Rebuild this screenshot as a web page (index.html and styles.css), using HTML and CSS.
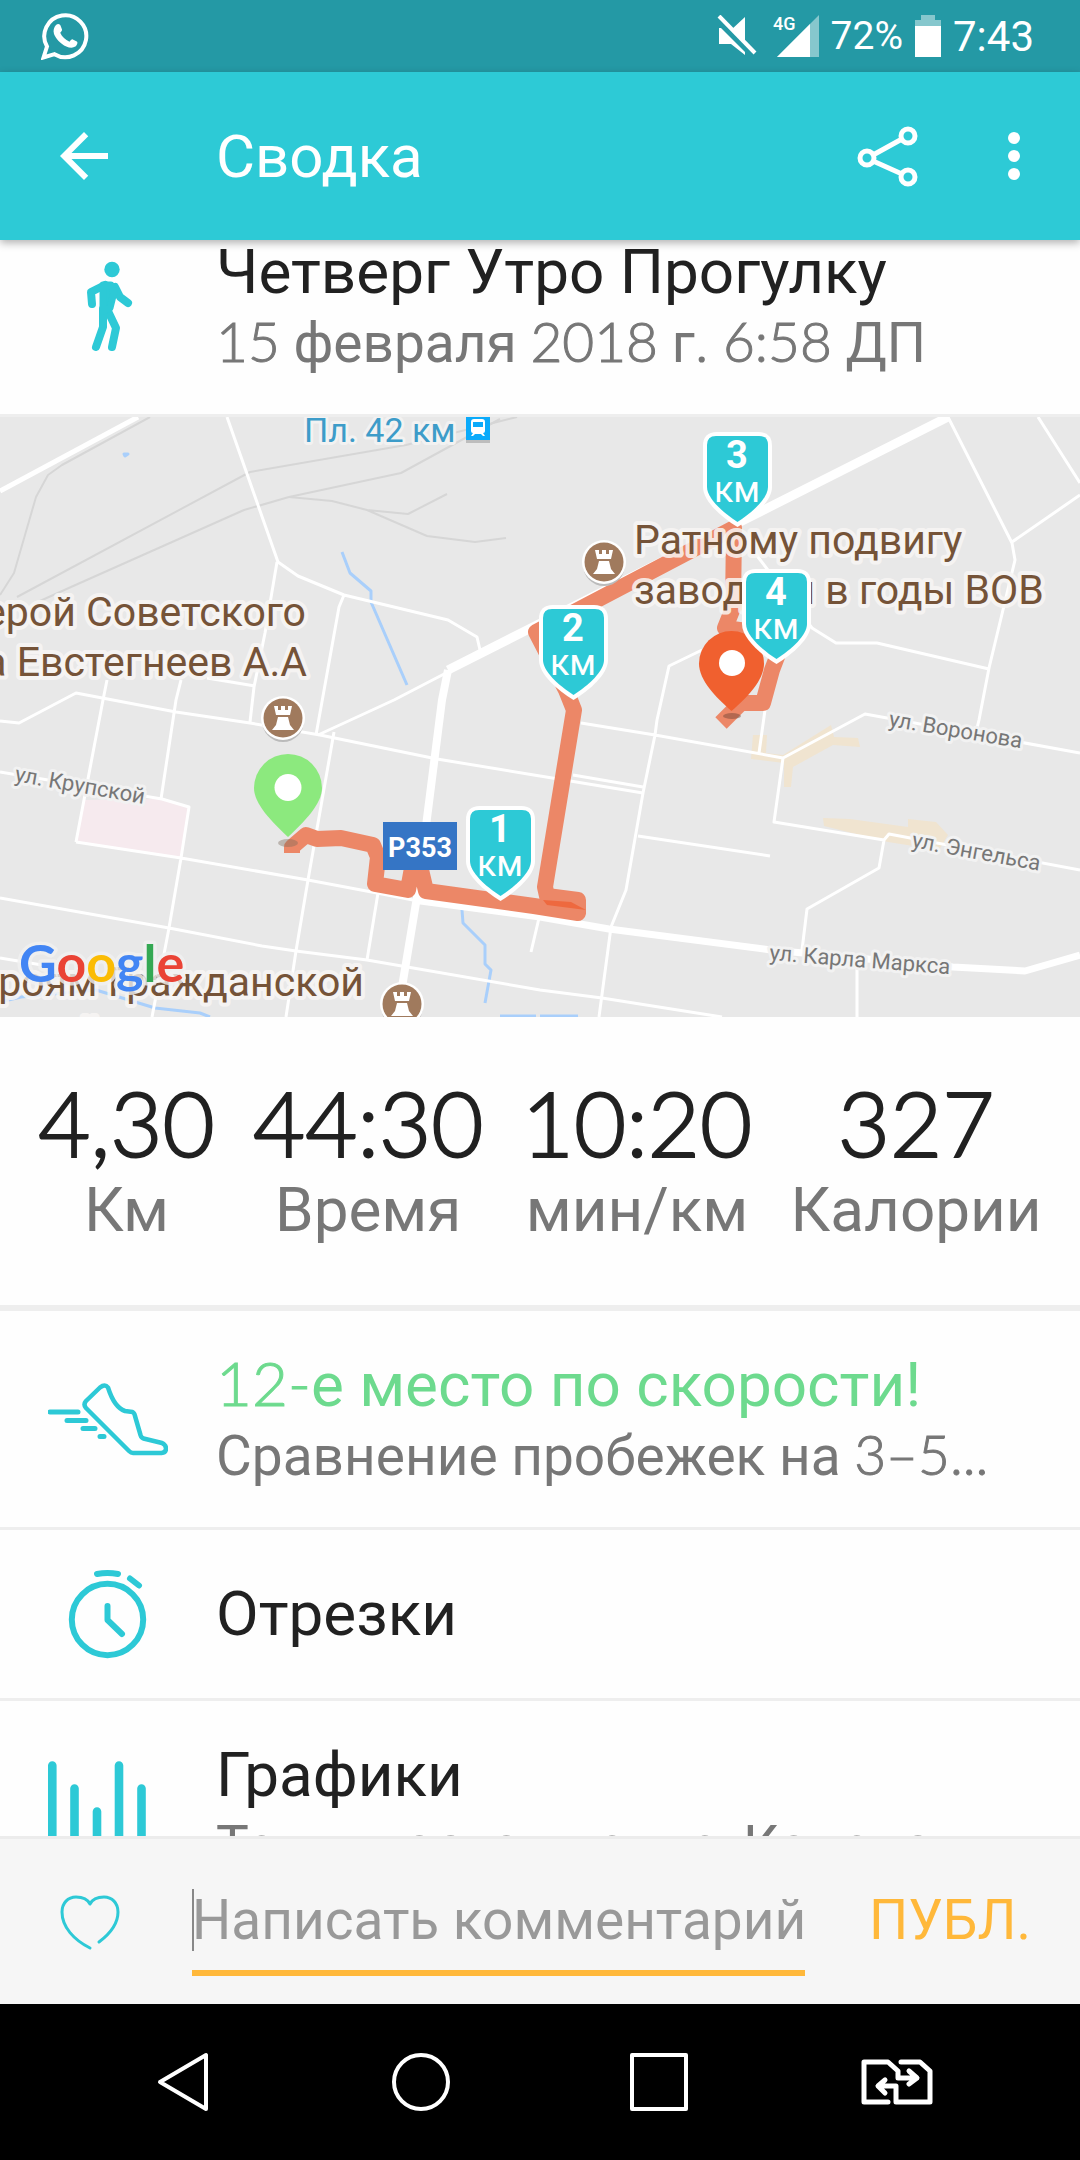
FILE: index.html
```html
<!DOCTYPE html>
<html lang="ru">
<head>
<meta charset="utf-8">
<meta name="viewport" content="width=device-width, initial-scale=1">
<title>Сводка</title>
<link rel="stylesheet" href="styles.css">
</head>
<body>
<div class="status">
  <svg class="status-app" width="48" height="48" viewBox="0 0 48 48" aria-hidden="true">
    <path d="M2.500 45.500 6 34.500A21 21 0 1 1 13.500 42.200Z" fill="none" stroke="#fff" stroke-width="4"/>
    <path d="M15 13c2-2 4-1 4.500.5l1.500 4c.4 1-.8 2.200-1.800 3.300 2 4.200 5 7 9.300 8.900 1.100-1.200 2.200-2.700 3.300-2.300l4 2c1.500.7 0 4.200-1.500 5.200-2.500 1.700-6 1.200-9-.2-6-2.700-10.500-7.700-12.300-12.500-1.100-3.400 0-7 2-8.900z" fill="#fff"/>
  </svg>
  <svg width="44" height="42" viewBox="0 0 44 42" fill="#fff" aria-hidden="true">
    <path d="M14 15 28 2v27zM2 13h2l24 24v3L14 29H2z"/>
    <path d="M2 1 38 38" stroke="#fff" stroke-width="4"/>
  </svg>
  <svg width="46" height="42" viewBox="0 0 46 42" aria-hidden="true">
    <path d="M46 0v42H4z" fill="#fff" opacity=".45"/>
    <path d="M37 9v33H4z" fill="#fff"/>
    <text class="net" x="0" y="15">4G</text>
  </svg>
  <span class="percent">72%</span>
  <svg width="26" height="42" viewBox="0 0 26 42" fill="#fff" aria-hidden="true">
    <path d="M6 0h14v5h6v6H0V5h6z" opacity=".45"/>
    <path d="M0 11h26v31H0z"/>
  </svg>
  <span class="time">7:43</span>
</div>

<header class="appbar">
  <button class="icon-btn" aria-label="Назад">
    <svg width="72" height="72" viewBox="0 0 24 24" fill="#fff"><path d="M20 11H7.830l5.590-5.590L12 4l-8 8 8 8 1.410-1.410L7.830 13H20z"/></svg>
  </button>
  <h1>Сводка</h1>
  <button class="icon-btn share" aria-label="Поделиться">
    <svg width="72" height="72" viewBox="0 0 72 72" fill="none" stroke="#fff" stroke-width="5">
      <circle cx="16" cy="38" r="7"/><circle cx="57" cy="16" r="7"/><circle cx="57" cy="57" r="7"/>
      <path d="M22 35 51 19M22 41l29 13" stroke-width="5"/>
    </svg>
  </button>
  <button class="icon-btn" aria-label="Ещё">
    <svg width="72" height="72" viewBox="0 0 72 72" fill="#fff"><circle cx="36" cy="18" r="6"/><circle cx="36" cy="36" r="6"/><circle cx="36" cy="54" r="6"/></svg>
  </button>
</header>

<main>
  <section class="row head">
    <svg class="icon" width="120" height="112" viewBox="0 0 120 112" fill="none" stroke="#2dc9d6" stroke-width="8" stroke-linecap="round" stroke-linejoin="round" aria-hidden="true">
      <circle cx="64" cy="16.500" r="7.700" fill="#2dc9d6" stroke="none"/>
      <path d="M44 51 43 39 57 32M67 34l5 10 8 6M55 56v18l-7 20M59 56l9 19-4 19"/>
      <path d="M55 32h8l3 7-4 16-7 3z" fill="#2dc9d6" stroke-width="7"/>
    </svg>
    <div class="lines">
      <h2>Четверг Утро Прогулку</h2>
      <p><span class="num">15</span> февраля <span class="num">2018</span> г. <span class="num">6:58</span> ДП</p>
    </div>
  </section>

  <svg class="map" viewBox="0 0 1080 600" role="img" aria-label="Маршрут на карте">
    <defs>
      <g id="km">
        <path d="M14 0h41q14 0 14 14v41c0 14-18 30-34.500 40C18 85 0 69 0 55V14Q0 0 14 0z" fill="#fff"/>
        <path d="M13 4h43q9 0 9 9v42c0 11-15 25-30.500 35C19 80 4 66 4 55V13q0-9 9-9z" fill="#2dc9d6"/>
      </g>
      <g id="rook">
        <circle cy="3" r="21" fill="#bbb"/>
        <circle r="22" fill="#fff"/><circle r="19.500" fill="#a07a5d"/>
        <path d="M-9-12h4v4h3v-4h4v4h3v-4h4l-2 9H-7zM-5-1H5L7 7l4 5h-22l4-5z" fill="#fff"/>
      </g>
    </defs>
    <path class="pink" d="M84 383 162 382 189 390 181 440 76 425z"/>
    <path class="tan" d="M831 308 834 320 858 321 860 330 833 328 793 350 791 370H784V346L751 342 753 318H767L766 336 783 338z"/>
    <path class="tan" d="M823 401 850 402 908 410V402L936 405 948 418 939 433 888 425 824 409z"/>
    <g class="rail">
      <path d="M150 0 62 48 48 58 36 80 14 156 0 178"/>
      <path d="M17 180 250 55 406 28 517 0"/>
      <path d="M40 184 71 170 244 93 289 80 401 56 500 2"/>
      <path d="M289 80 332 84 367 93 408 97 447 77M367 93l60 26 48 6 31-4"/>
    </g>
    <g class="water">
      <path d="M342 135l8 21 21 18v11l36 83M462 493l1 13 22 22v19l6 6-6 33"/>
      <path d="M0 585 21 580 96 573 155 591 200 596 210 600M540 599h38M500 599h36"/>
      <path d="M124 37h4l-3 2z"/>
    </g>
    <g class="street">
      <path d="M0 74 138 0" stroke-width="5"/>
      <path d="M227 0l51 145 20 14 46 19 104 25 29 17 3 13M277 145l-12 71-11 54-4 35M344 178l-5 12-23 128M446 256l-52 27-76 35"/>
      <path d="M0 304 19 306 76 276 176 295 250 306 320 318 437 342 540 359 643 376M573 358l70 12M107 263l-4 20-27 142M181 263l-5 20-15 99M207 261l48 8"/>
      <path d="M0 355 162 382 189 390 181 441 169 511 152 600M76 425l105 16 127 22 69 13 36 7M0 481l169 30 93 18 34 5 71 9 173 30 62 8 120 19M0 541l60 10"/>
      <path d="M334 315l-26 148-12 71-10 66M378 476l-11 67M539 501l-8 34"/>
      <path d="M948 0l64 126 3 17-26 108-10 52-2 8M1012 125l68-47M1038 0l42 66M750 120l8 20 54 71 24 15h41l112 26"/>
      <path d="M702 233l-33 16-12 54-2 15-12 58-17 97-15 37-12 90M581 306l74 12 128 23 82-44 215 39M765 293l-6 43M783 341l-9 64 110 18 5-6 191 36M884 423l-5 28-72 41-5 41M638 419l132 20M857 550v50"/>
      <path d="M948 0 742 104 527 213 448 253" stroke-width="9"/>
      <path d="M448 253 442 283 417 480 397 600" stroke-width="8"/>
      <path d="M413 483 540 500 609 512 771 533 953 550 1025 554 1080 538" stroke-width="7"/>
    </g>
    <g class="route">
      <path d="M292 436v-6l14-12 11 4 24-1 32 7 5 12-3 27 33 6 6-33h4l8 34 108 15 44 7V483l-31-4-2-9 29-177-8-20-30-58 198-104-1 80-8 20 60 8-13 34-9 33h-22l-20 20"/>
      <path class="overlap" d="M543 483 571 485 586 493 547 488z"/>
    </g>

    <g class="place">
      <text x="306" y="209" text-anchor="end">Герой Советского</text>
      <text x="307" y="259" text-anchor="end">Союза Евстегнеев А.А</text>
      <text x="634" y="137">Ратному подвигу</text>
      <text x="634" y="187">заводчан в годы ВОВ</text>
      <text x="364" y="579" text-anchor="end">Героям Гражданской</text>
      <text x="31" y="629">войны</text>
    </g>
    <g class="name">
      <text transform="translate(14 364) rotate(10)">ул. Крупской</text>
      <text transform="translate(888 309) rotate(9.500)">ул. Воронова</text>
      <text transform="translate(911 430) rotate(10.500)">ул. Энгельса</text>
      <text transform="translate(769 543) rotate(4.500)">ул. Карла Маркса</text>
    </g>
    <text class="station" x="304" y="25">Пл. 42 км</text>
    <path d="M466 0h24v26h-24z" fill="#bdbdbd"/>
    <path d="M466 0h24v23h-24z" fill="#0aaafa"/>
    <path d="M471 5q0-3 3-3h8q3 0 3 3v9q0 2-2 2l2 3h-2l-2-2h-6l-2 2h-2l2-3q-2 0-2-2zm2 0v5h10V5z" fill="#fff" fill-rule="evenodd"/>

    <use href="#rook" x="283" y="301"/>
    <use href="#rook" x="604" y="145"/>
    <use href="#rook" x="402" y="587"/>

    <path d="M383 405h74v48h-74z" fill="#3575c5"/>
    <text class="shield" x="420" y="440">Р353</text>

    <ellipse cx="288" cy="426" rx="10" ry="4" fill="#7a6a5a" opacity=".4"/>
    <path fill="#8ce97e" d="M288 337a34 34 0 0 1 34 34c0 16-18 34-34 49-16-15-34-33-34-49a34 34 0 0 1 34-34z"/>
    <circle cx="288" cy="370.500" r="13.500" fill="#fff"/>

    <g class="km">
      <use href="#km" x="466" y="389"/><text class="km-n" x="500" y="425">1</text><text x="500" y="459">км</text>
      <use href="#km" x="539" y="188"/><text class="km-n" x="573" y="224">2</text><text x="573" y="258">км</text>
      <use href="#km" x="703" y="15"/><text class="km-n" x="737" y="51">3</text><text x="737" y="85">км</text>
    </g>
    <ellipse cx="732" cy="299" rx="9" ry="3" fill="#7a4a3a" opacity=".5"/>
    <path fill="#f0602f" d="M731.500 214a32.500 32.500 0 0 1 32.500 32.500c0 17-17 34-32.500 47.500-15.500-13.500-32.500-30.500-32.500-47.500A32.500 32.500 0 0 1 731.500 214z"/>
    <circle cx="732" cy="246" r="13" fill="#fff"/>
    <g class="km">
      <use href="#km" x="742" y="152"/><text class="km-n" x="776" y="188">4</text><text x="776" y="222">км</text>
    </g>

    <text class="google" x="19" y="565"><tspan fill="#4285f4">G</tspan><tspan fill="#ea4335">o</tspan><tspan fill="#fbbc05">o</tspan><tspan fill="#4285f4">g</tspan><tspan fill="#34a853">l</tspan><tspan fill="#ea4335">e</tspan></text>
  </svg>

  <dl class="stats">
    <div><dd>4,30</dd><dt>Км</dt></div>
    <div><dd>44:30</dd><dt>Время</dt></div>
    <div><dd>10:20</dd><dt>мин/км</dt></div>
    <div><dd>327</dd><dt>Калории</dt></div>
  </dl>

  <section class="row">
    <svg class="icon" width="120" height="112" viewBox="0 0 120 112" fill="none" stroke="#2dc9d6" stroke-width="4.500" stroke-linecap="round" stroke-linejoin="round" aria-hidden="true">
      <path d="M38 35 52 21.500q5-4 8 0C63 31 68 42 77 45l7.500 1q2 1 2.500 4l5.500 19q1 3 3 3.500L114 77q4 2 4 5.500 0 4-4.500 4.500H85q-2 0-4-2L38 42q-3-3.500 0-7z"/>
      <path d="M2 46h28M19 54.500h19M35 62.500h12M52 70.500h4" stroke-width="5"/>
    </svg>
    <div class="lines">
      <h2 class="green"><span class="num">12-</span>е место по скорости!</h2>
      <p>Сравнение пробежек на <span class="num">3–5...</span></p>
    </div>
  </section>
  <section class="row single">
    <svg class="icon" width="120" height="112" viewBox="0 0 120 112" fill="none" stroke="#2dc9d6" stroke-width="6" stroke-linecap="round" stroke-linejoin="round" aria-hidden="true">
      <circle cx="59.500" cy="61.500" r="35.700"/>
      <path d="M49 16q10.500-2 21 0M82 20.500l9 7M59.500 48v14L74 76"/>
    </svg>
    <div class="lines"><h2>Отрезки</h2></div>
  </section>
  <section class="row">
    <svg class="icon" width="120" height="112" viewBox="0 0 120 112" fill="none" stroke="#2dc9d6" stroke-width="8.600" stroke-linecap="round" aria-hidden="true">
      <path d="M4.300 9.500V108M26.500 32.500V108M49 55.500V108M71 9.500V108M93.500 32.500V108"/>
    </svg>
    <div class="lines">
      <h2>Графики</h2>
      <p>Темп, восхождение, Каденс</p>
    </div>
  </section>
</main>

<form class="comment">
  <button type="button" class="like" aria-label="Нравится">
    <svg width="72" height="72" viewBox="0 0 72 72" fill="none" stroke="#2dc9d6" stroke-width="3" stroke-linecap="round" stroke-linejoin="round"><path d="M45 55C57 46 64 37 64 25 64 16 58 10 50 10 43 10 38 13 36 17 34 13 29 10 22 10 14 10 8 16 8 25 8 40 20 53 36 61"/></svg>
  </button>
  <label class="field"><input type="text" aria-label="Комментарий" placeholder="Написать комментарий"></label>
  <button type="button" class="post">ПУБЛ.</button>
</form>

<nav class="sysnav">
  <button aria-label="Назад"><svg width="60" height="60" viewBox="0 0 60 60"><path d="M53 3v54L7 30z"/></svg></button>
  <button aria-label="Домой"><svg width="60" height="60" viewBox="0 0 60 60"><circle cx="30" cy="30" r="27"/></svg></button>
  <button aria-label="Недавние"><svg width="60" height="60" viewBox="0 0 60 60"><path d="M3 3h54v54H3z"/></svg></button>
  <button aria-label="Сменить SIM"><svg width="74" height="48" viewBox="0 0 74 48"><path stroke-width="5" d="M28 44H4V4h24l10 9v7h16M49 13l8 7-8 6M41 4h19l10 9v31H36V28H20M25 22l-7 6 7 7"/></svg></button>
</nav>
</body>
</html>
```
FILE: styles.css
```css
* { box-sizing: border-box; }
body {
  margin: 0;
  height: 100vh;
  display: flex;
  flex-direction: column;
  background: #fefefe;
  color: #212121;
  font-family: Roboto, sans-serif;
  overflow: hidden;
}
h1, h2, p, dl, dd { margin: 0; font-weight: 400; }
svg { display: block; }
button {
  background: none;
  border: 0;
  padding: 0;
  font: inherit;
  color: inherit;
}

.status {
  flex: none;
  height: 72px;
  padding: 0 46px 0 41px;
  display: flex;
  align-items: center;
  gap: 12px;
  background: #2499a5;
  color: #fff;
}
.status-app { margin-right: auto; }
.net { font-size: 18px; font-weight: 500; fill: #fff; }
.percent { font-size: 39px; }
.time { font-size: 42px; }

.appbar {
  flex: none;
  height: 168px;
  padding: 0 30px 0 48px;
  display: flex;
  align-items: center;
  background: #2dcad6;
  color: #fff;
  position: relative;
  z-index: 1;
  box-shadow: 0 3px 8px rgba(0, 0, 0, .3);
}
.appbar h1 {
  flex: 1;
  margin-left: 96px;
  font-size: 60px;
}
.share { margin-right: 55px; }

main { flex: 1; min-height: 0; overflow: hidden; }
.row {
  display: flex;
  align-items: center;
  padding: 42px 48px 36px;
  border-bottom: 3px solid #eee;
}
.row.head { padding-top: 0; }
.row.single { padding-top: 28px; padding-bottom: 28px; }
.icon { flex: none; margin: -12px 48px -12px 0; }
.single .icon { margin-top: 0; margin-bottom: 0; }
.lines {
  flex: 1;
  min-width: 0;
  display: flex;
  flex-direction: column;
  gap: 4px;
  white-space: nowrap;
}
.lines h2 { font-size: 62px; line-height: 64px; }
.lines p { font-size: 55px; line-height: 70px; color: #777; }
.lines .green { color: #6dda8e; }
.num {
  font-family: Lato, sans-serif;
  font-weight: 300;
  line-height: 0;
  -webkit-text-stroke: 1px currentColor;
}

.map { width: 100%; height: auto; background: #e8e8e8; overflow: hidden; }
.pink { fill: #f6eaee; }
.tan { fill: #f0e4d0; }
.rail, .water, .street { fill: none; stroke-linejoin: round; }
.rail { stroke: #d6d6d6; stroke-width: 2; }
.water { stroke: #a9cffb; stroke-width: 3; }
.street { stroke: #fff; stroke-width: 3; }
.route { fill: none; stroke: #ec8767; stroke-width: 16; stroke-linejoin: round; }
.overlap { fill: #ee693f; stroke: none; }
.map text { paint-order: stroke; stroke-linejoin: round; }
.place { font-size: 41px; fill: #755338; stroke: rgba(248, 246, 244, .85); stroke-width: 8px; }
.name { font-size: 22px; fill: #777; stroke: #f2f2f2; stroke-width: 6px; }
.station { font-size: 34px; fill: #3d9cc9; stroke: #f2f2f2; stroke-width: 6px; }
.shield { font-size: 27px; font-weight: 700; fill: #fff; text-anchor: middle; }
.km { font-size: 36px; fill: #fff; text-anchor: middle; }
.km-n { font-size: 38px; font-weight: 700; }
.google {
  font-family: Lato, sans-serif;
  font-size: 52px;
  font-weight: 700;
  stroke: rgba(240, 240, 240, .8);
  stroke-width: 7px;
}

.stats {
  display: flex;
  justify-content: space-evenly;
  padding: 60px 0;
  border-bottom: 6px solid #eee;
  text-align: center;
}
.stats div { display: flex; flex-direction: column; gap: 8px; }
.stats dd {
  font-family: Lato, sans-serif;
  font-size: 90px;
  font-weight: 300;
  line-height: 90px;
  -webkit-text-stroke: 2px currentColor;
}
.stats dt { font-size: 62px; line-height: 70px; color: #777; }

.comment {
  flex: none;
  height: 168px;
  display: flex;
  align-items: flex-start;
  padding: 48px 49px 0 54px;
  border-top: 3px solid #ececec;
  background: #f6f6f6;
  font-size: 55px;
  line-height: 66px;
}
.like { margin-right: 66px; }
.field { flex: 1; min-width: 0; position: relative; }
.field::before {
  content: "";
  position: absolute;
  left: 0;
  top: 2px;
  width: 2px;
  height: 62px;
  background: #888;
}
.field input {
  display: block;
  width: 100%;
  height: 89px;
  padding: 0 0 17px;
  border: 0;
  border-bottom: 6px solid #ffb83a;
  outline: 0;
  background: none;
  font: inherit;
  text-overflow: clip;
}
.field input::placeholder { color: #999; opacity: 1; }
.post { margin-left: 64px; color: #ffb83a; }

.sysnav {
  flex: none;
  height: 156px;
  padding: 0 64px;
  display: grid;
  grid-template-columns: repeat(4, 1fr);
  place-items: center;
  background: #000;
}
.sysnav svg { fill: none; stroke: #fff; stroke-width: 4; stroke-linejoin: round; stroke-linecap: round; }
```
